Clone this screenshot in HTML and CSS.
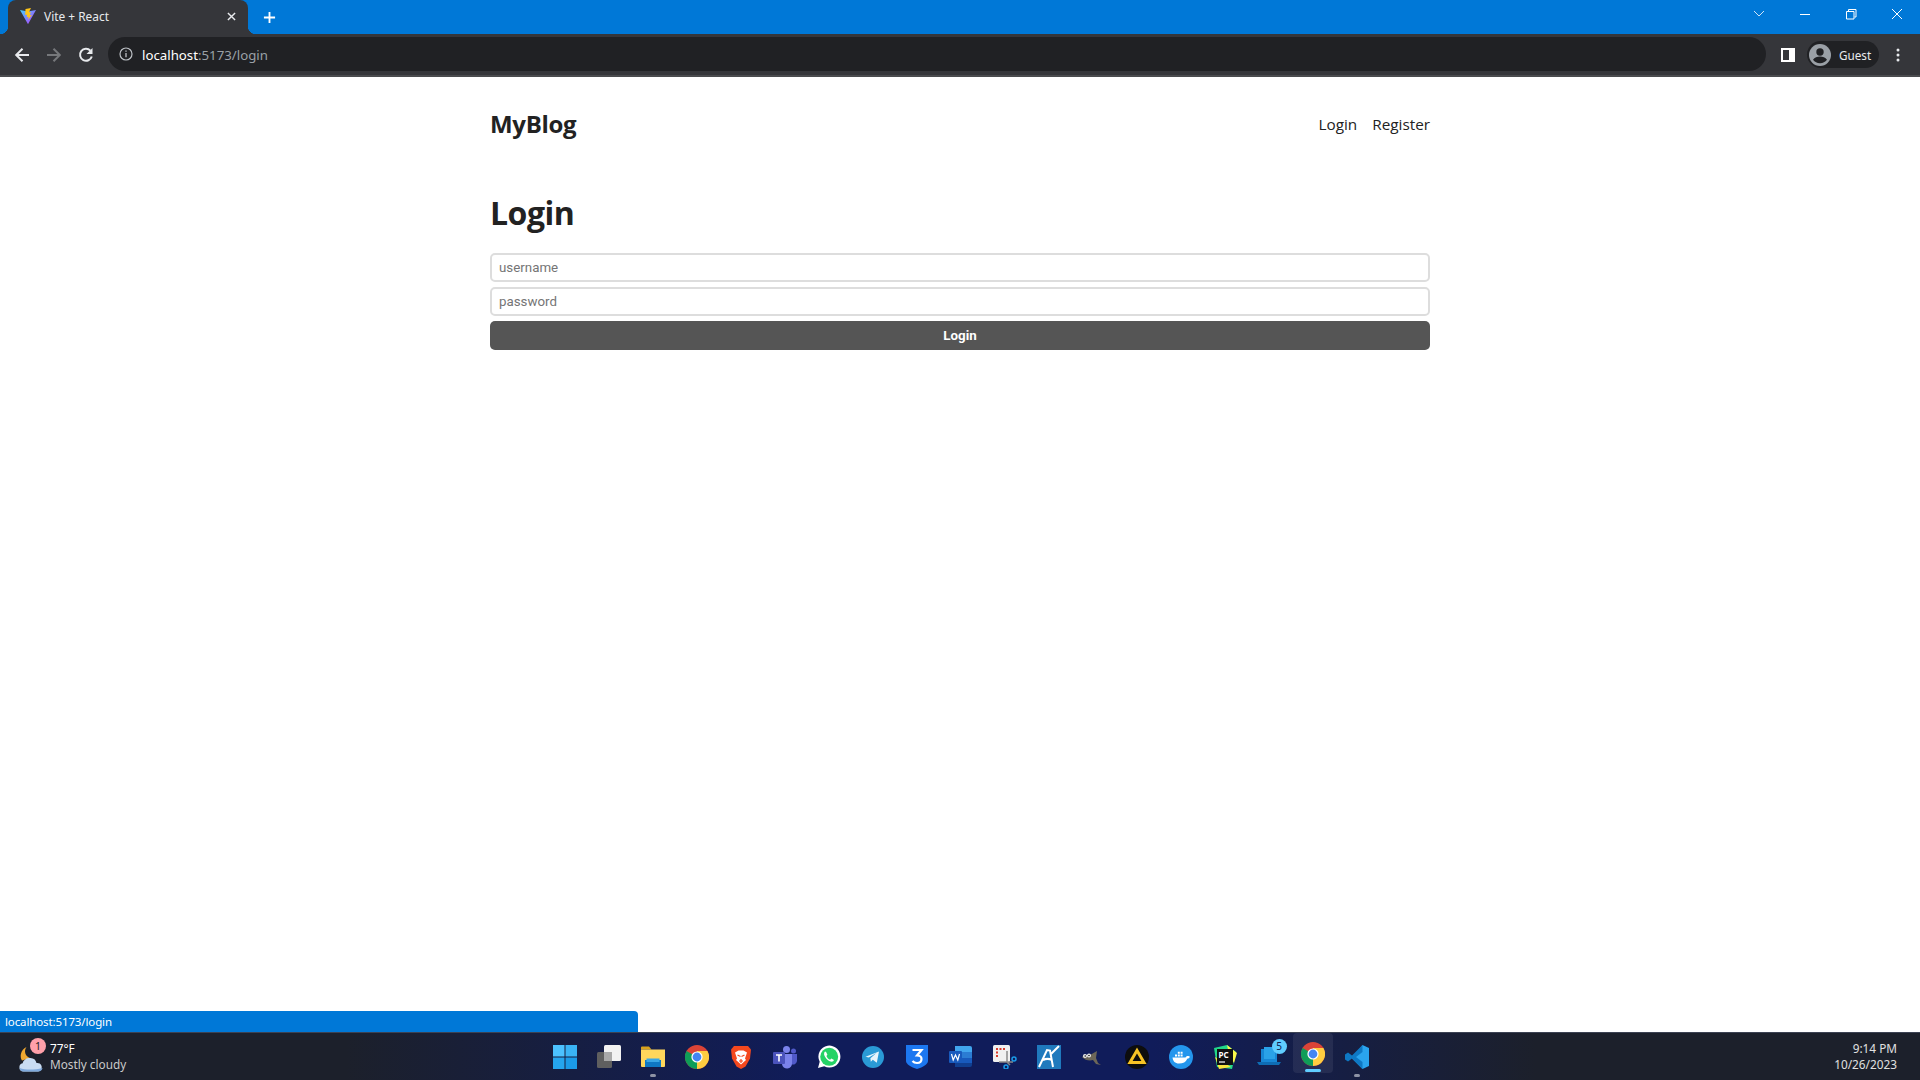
FILE: index.html
```html
<!DOCTYPE html>
<html lang="en">
<head>
<meta charset="utf-8">
<title>Vite + React</title>
<link rel="stylesheet" href="styles.css">
</head>
<body>
<div class="screen">
  <div class="titlebar">
    <div class="tab">
      <svg class="favicon" viewBox="0 0 16 16"><defs><linearGradient id="vg" x1="0" y1="0" x2="1" y2="1"><stop offset="0" stop-color="#41d1ff"/><stop offset="1" stop-color="#bd34fe"/></linearGradient></defs><path fill="url(#vg)" d="M0 2l8 1.400L16 2 8.400 15.600a.4.4 0 0 1-.8 0z"/><path fill="#ffc517" d="M11 0 5.500 1l-.3 6 2-.4-.4 2.600 1.800-.5-.5 3L12 7l-2.200.4.900-3.400-1.800.3z"/></svg>
      <span class="tab-title">Vite + React</span>
      <svg class="tab-close" viewBox="0 0 10 10"><path d="M1 1l8 8M9 1l-8 8" stroke="#e8eaed" stroke-width="1.600"/></svg>
    </div>
    <svg class="new-tab" viewBox="0 0 14 14"><path d="M7 1v12M1 7h12" stroke="#fff" stroke-width="2"/></svg>
    <div class="win-controls">
      <svg class="win-btn" viewBox="0 0 46 34"><path d="M18 11l5 5 5-5" fill="none" stroke="#cfe4f7" stroke-width="1"/></svg>
      <svg class="win-btn" viewBox="0 0 46 34"><path d="M18 14.500h10" stroke="#fff" stroke-width="1"/></svg>
      <svg class="win-btn" viewBox="0 0 46 34"><path d="M18.500 11.500h7.500v7.500h-7.500zM20.500 11V9.500h7.500v7.500H26.500" fill="none" stroke="#fff" stroke-width="1"/></svg>
      <svg class="win-btn" viewBox="0 0 46 34"><path d="M18 9l10 10M28 9 18 19" stroke="#fff" stroke-width="1"/></svg>
    </div>
  </div>
  <div class="toolbar">
    <div class="nav-btns">
      <svg class="nav-icon" viewBox="0 0 16 16"><path d="M15 8H2.500M8.500 1.800 2.200 8l6.300 6.200" fill="none" stroke="#e8eaed" stroke-width="2"/></svg>
      <svg class="nav-icon" viewBox="0 0 16 16"><path d="M1 8h12.500M7.500 1.800 13.800 8l-6.300 6.200" fill="none" stroke="#76787b" stroke-width="2"/></svg>
      <svg class="nav-icon" viewBox="0 0 16 16"><path d="M13.800 9.500A6 6 0 1 1 12.400 3.600" fill="none" stroke="#e8eaed" stroke-width="2"/><path d="M14.500 1v6h-6z" fill="#e8eaed"/></svg>
    </div>
    <div class="omnibox">
      <svg class="info" viewBox="0 0 14 14"><circle cx="7" cy="7" r="6" fill="none" stroke="#bdc1c6" stroke-width="1.200"/><path d="M7 6v4.300M7 3.500v1.300" stroke="#bdc1c6" stroke-width="1.300"/></svg>
      <span class="url"><span class="url-host">localhost</span>:5173/login</span>
    </div>
    <svg class="side-icon" viewBox="0 0 14 14"><path fill="#fff" fill-rule="evenodd" d="M0 0h14v14H0zM2 2v10h6V2z"/></svg>
    <div class="guest">
      <svg class="avatar" viewBox="0 0 22 22"><circle cx="11" cy="11" r="11" fill="#9aa0a6"/><circle cx="11" cy="8" r="3.700" fill="#202124"/><path d="M4 15.800c1.500-2.400 4.300-3.300 7-3.300s5.500.9 7 3.300A8.800 8.800 0 0 1 11 19.200a8.800 8.800 0 0 1-7-3.400z" fill="#202124"/></svg>
      <span>Guest</span>
    </div>
    <svg class="menu-dots" viewBox="0 0 4 14"><circle cx="2" cy="2" r="1.500" fill="#e8eaed"/><circle cx="2" cy="7" r="1.500" fill="#e8eaed"/><circle cx="2" cy="12" r="1.500" fill="#e8eaed"/></svg>
  </div>

  <div class="viewport">
    <main class="page">
      <header class="site-header">
        <a class="logo">MyBlog</a>
        <nav class="site-nav"><a>Login</a><a>Register</a></nav>
      </header>
      <h1 class="heading">Login</h1>
      <form class="form">
        <input class="field" type="text" placeholder="username">
        <input class="field" type="password" placeholder="password">
        <button class="submit" type="button">Login</button>
      </form>
    </main>
    <div class="status-bubble">localhost:5173/login</div>
  </div>

  <footer class="taskbar">
    <div class="weather">
      <div class="weather-icon">
        <svg viewBox="0 0 24 25"><path d="M7.500 0a7 7 0 0 0 3.500 11L3 13.500C.5 10 1.500 2.500 7.500 0z" fill="#f0a830"/><path d="M4.500 24.500a4.200 4.200 0 0 1-.8-8.300C4.500 12.500 8 10.500 11.500 11a6.500 6.500 0 0 1 6 5 4.300 4.300 0 0 1 1.800 8.500z" fill="#c9dcf2"/><path d="M.5 21c6 2 15 2 23 0a4.300 4.300 0 0 1-4.200 3.500H4.500A4.200 4.200 0 0 1 .5 21z" fill="#7fa9dc"/></svg>
        <span class="weather-badge">1</span>
      </div>
      <div class="weather-text"><span class="temp">77°F</span><span class="cond">Mostly cloudy</span></div>
    </div>

    <div class="apps">
      <div class="app"><svg viewBox="0 0 24 24"><path fill="#4cc2ff" d="M0 0h11.500v11.500H0z"/><path fill="#3ab4f5" d="M12.500 0H24v11.500H12.500z"/><path fill="#25a5ee" d="M0 12.500h11.500V24H0z"/><path fill="#1b9be8" d="M12.500 12.500H24V24H12.500z"/></svg></div>
      <div class="app"><svg viewBox="0 0 24 24"><rect x="0" y="7" width="15" height="16" rx="1.500" fill="#5f5f5f"/><rect x="7" y="0" width="17" height="16" rx="1.500" fill="#f2f2f2"/><path d="M7 7h8v9H7z" fill="#a9a9a9"/></svg></div>
      <div class="app app-open"><svg viewBox="0 0 24 24"><path d="M0 2.500A1 1 0 0 1 1 1.500h7l2.500 3H0z" fill="#d9a21c"/><path d="M0 4.500h24V21a1 1 0 0 1-1 1H1a1 1 0 0 1-1-1z" fill="#ffd75c"/><path d="M4 15h16v7H4z" fill="#0f78c4"/><path d="M5.500 13.500h13V17h-13z" fill="#3aa7e6"/></svg></div>
      <div class="app"><svg viewBox="0 0 24 24"><use href="#chrome"/></svg></div>
      <div class="app"><svg viewBox="0 0 24 24"><path d="M5 1h14l3 3.500-1 9-4.500 8L12 24l-4.500-2.500-4.500-8-1-9z" fill="#f4481e"/><path d="M6 7.500 9.500 5.500h5L18 7.500l-2 6 1 1.500-5 4.500L7 15l1-1.500z" fill="#fff"/><path d="M8.500 10l3 1.500M15.500 10l-3 1.500M12 14v4M10 16h4" stroke="#f4481e" stroke-width="1.200"/></svg></div>
      <div class="app"><svg viewBox="0 0 24 24"><circle cx="13.500" cy="4.500" r="3.500" fill="#7b83eb"/><circle cx="20.500" cy="6" r="2.500" fill="#5059c9"/><path d="M16 9h8v7a4 4 0 0 1-6 3z" fill="#5059c9"/><path d="M8 9h11v9a5 5 0 0 1-10 1z" fill="#7b83eb"/><rect x="0" y="7" width="12" height="12" rx="1" fill="#4b53bc"/><path d="M3 10h6M6 10v6.500" stroke="#fff" stroke-width="1.600"/></svg></div>
      <div class="app"><svg viewBox="0 0 24 24"><path d="M1 23l1.700-6.200A11 11 0 1 1 7.200 21.300z" fill="#fff"/><circle cx="12.200" cy="11.800" r="9" fill="#25d366"/><path d="M8 6.500c-1.500 1.500-1.300 4 1.200 7 2.800 3 5.500 4 7 2.800l.8-1.300-2.700-1.500-1.200 1.200c-1.500-.5-3-2-3.700-3.800l1-1.200-1.300-2.800z" fill="#fff"/></svg></div>
      <div class="app"><svg viewBox="0 0 24 24"><circle cx="12" cy="12" r="11" fill="#2a9ad6"/><path d="M4.500 11.800 18 6.500l-2.200 11.200-4-2.900-2 1.900-.4-3.500 6-5.200-7.600 4.500z" fill="#e8f4fb"/></svg></div>
      <div class="app"><svg viewBox="0 0 24 24"><path d="M1 0h22v16c0 3-5 6.500-11 8C6 22.500 1 19 1 16z" fill="#1c77f0"/><path d="M7.500 5h9L12 10.500c3 0 4.500 1.500 4.500 3.500 0 2.500-2 4-4.500 4-1.800 0-3.500-.8-4.500-2" fill="none" stroke="#fff" stroke-width="2.200"/></svg></div>
      <div class="app"><svg viewBox="0 0 24 24"><path d="M6 1h15a2 2 0 0 1 2 2v4H6z" fill="#41a5ee"/><path d="M6 7h17v6H6z" fill="#2b7cd3"/><path d="M6 13h17v5H6z" fill="#185abd"/><path d="M6 18h17v2a2 2 0 0 1-2 2H6z" fill="#103f91"/><rect x="0" y="6" width="13" height="12" rx="1" fill="#185abd"/><path d="M2.500 9l1.700 6 2.300-5 2.300 5 1.700-6" fill="none" stroke="#fff" stroke-width="1.200"/></svg></div>
      <div class="app"><svg viewBox="0 0 24 24"><rect x="0" y="0" width="17" height="17" rx="1.500" fill="#f0f0f0"/><path d="M3 3h2v2H3zM6.500 3h2v2h-2zM10 3h2v2h-2zM3 6.500h2v2H3zM3 10h2v2H3z" fill="#d83b2c"/><path d="M14 6v11M6 17h14M14 17l3 3" stroke="#8a8a8a" stroke-width="1.500"/><circle cx="21" cy="14" r="2" fill="none" stroke="#1a9be8" stroke-width="1.500"/><circle cx="13" cy="22" r="2" fill="none" stroke="#1a9be8" stroke-width="1.500"/></svg></div>
      <div class="app"><svg viewBox="0 0 24 24"><rect width="24" height="24" fill="#1f79bd"/><path d="M2 22 10 5l3 .5 3 16.500M6 15c3-1.500 6-1.500 9 0M14 9l8-8" fill="none" stroke="#fff" stroke-width="2"/></svg></div>
      <div class="app app-gimp"><svg viewBox="0 0 24 24"><path d="M1 12c2-2 5-2.500 8-2l7-4-1 7 2 5 3 2-5-1-3-4c-3 1-8 .5-11-3z" fill="#6c6658"/><circle cx="4" cy="11" r="2" fill="#eee"/><circle cx="8" cy="10.500" r="2" fill="#eee"/><circle cx="4.200" cy="11" r=".8" fill="#111"/><circle cx="8" cy="10.500" r=".8" fill="#111"/></svg></div>
      <div class="app"><svg viewBox="0 0 24 24"><circle cx="12" cy="12" r="12" fill="#0d0d0d"/><path d="M12 5.500 19 17.500H5z" fill="none" stroke="#f7c325" stroke-width="3"/></svg></div>
      <div class="app"><svg viewBox="0 0 24 24"><circle cx="12" cy="12" r="12" fill="#2496ed"/><path d="M3.500 12.500h13c.5-1.200 1.500-1.800 3-1.500l1.500.8c-.6 1.300-1.500 1.800-2.800 1.900C17 17 14 18.500 10 18.500c-4 0-6-2.200-6.500-6z" fill="#fff"/><path d="M6 9.500h2v2H6zM8.800 9.500h2v2h-2zM11.600 9.500h2v2h-2zM8.800 6.800h2v2h-2zM11.600 6.800h2v2h-2z" fill="#fff"/></svg></div>
      <div class="app"><svg viewBox="0 0 24 24"><path d="M1 3l13-3 9 7-4 17-15-2z" fill="#21d789"/><path d="M14 0l10 8-3 10-5-9z" fill="#fcf84a"/><path d="M2 12 18 22l-12 2z" fill="#f9e53c"/><rect x="4" y="4" width="16" height="16" fill="#111"/><path d="M6 17h6" stroke="#fff" stroke-width="1.200"/><text class="pc-text" x="5.500" y="12.500">PC</text></svg></div>
      <div class="app"><svg viewBox="0 0 24 24"><path d="M4 4h16v13H4z" fill="#1787d6"/><path d="M7 2h11v12H7z" fill="#2aa2e8"/><path d="M0 17h24l-2 3H2z" fill="#0e6cb4"/></svg><span class="app-badge">5</span></div>
      <div class="app app-active"><svg viewBox="0 0 24 24"><use href="#chrome"/></svg></div>
      <div class="app app-open"><svg viewBox="0 0 24 24"><path d="M17.500 0 24 3v18l-6.500 3L7 13.500z" fill="#2aa4ee"/><path d="M17.500 0 7 10.500l-4-3L0 9.500v5l3 2 4-3L17.500 24V17L11 12l6.500-5z" fill="#0e78c4"/></svg></div>
    </div>

    <div class="clock"><span>9:14 PM</span><span>10/26/2023</span></div>
  </footer>
</div>
<svg class="defs" width="0" height="0"><defs><symbol id="chrome" viewBox="0 0 24 24"><circle cx="12" cy="12" r="12" fill="#db4437"/><path d="M12 12 1.600 6A12 12 0 0 0 12 24z" fill="#0f9d58"/><path d="M12 12v12A12 12 0 0 0 22.400 6H12z" fill="#ffcd40"/><circle cx="12" cy="12" r="5.600" fill="#fff"/><circle cx="12" cy="12" r="4.400" fill="#4285f4"/></symbol></defs></svg>
</body>
</html>
```
FILE: styles.css
```css
* { box-sizing: border-box; }
html, body { margin: 0; height: 100%; }
body { font-family: "Open Sans", "Noto Sans", sans-serif; background: #fff; overflow: hidden; }
.defs { position: absolute; }

.screen { display: flex; flex-direction: column; height: 100vh; }

/* browser frame */
.titlebar { height: 34px; background: #0078d7; display: flex; align-items: flex-end; padding-left: 8px; flex: none; }
.tab { width: 240px; height: 34px; background: #35363a; border-radius: 8px 8px 0 0; display: flex; align-items: center; padding: 0 11px 2px 12px; position: relative; }
.tab::before, .tab::after { content: ""; position: absolute; bottom: 0; width: 8px; height: 8px; }
.tab::before { left: -8px; background: radial-gradient(circle at 0 0, transparent 8px, #35363a 8.500px); }
.tab::after { right: -8px; background: radial-gradient(circle at 100% 0, transparent 8px, #35363a 8.500px); }
.favicon { width: 16px; height: 16px; flex: none; }
.tab-title { margin-left: 8px; font-size: 11.900px; color: #e8eaed; flex: 1; font-family: "Noto Sans", sans-serif; }
.tab-close { width: 9px; height: 9px; flex: none; margin-right: 1px; }
.new-tab { width: 13px; height: 13px; margin: 0 0 10px 15px; flex: none; }
.win-controls { margin-left: auto; display: flex; height: 34px; }
.win-btn { width: 46px; height: 34px; display: block; }

.toolbar { height: 43px; background: #35363a; border-bottom: 2px solid #4a4b4e; display: flex; align-items: center; flex: none; padding-right: 20px; }
.nav-btns { display: flex; width: 108px; padding-left: 14px; gap: 16px; flex: none; }
.nav-icon { width: 16px; height: 16px; flex: none; }
.omnibox { flex: 1; height: 34px; margin-top: -1px; background: #202124; border-radius: 17px; display: flex; align-items: center; padding-left: 11px; }
.info { width: 14px; height: 14px; flex: none; }
.url { margin-left: 9px; padding-top: 1px; font-size: 13.250px; color: #9aa0a6; font-family: "Noto Sans", sans-serif; }
.url-host { color: #fff; }
.side-icon { width: 14px; height: 14px; margin-left: 15px; flex: none; }
.guest { width: 72px; height: 27px; margin-left: 12px; background: #202124; border-radius: 14px; display: flex; align-items: center; padding-left: 2px; gap: 8px; color: #e8eaed; font-size: 11.700px; flex: none; font-family: "Noto Sans", sans-serif; }
.avatar { width: 22px; height: 22px; flex: none; }
.menu-dots { width: 4px; height: 14px; margin-left: 17px; flex: none; }

/* page */
.viewport { flex: 1; position: relative; min-height: 0; }
.page { width: 940px; margin: 0 auto; padding-top: 29px; color: #222; }
.site-header { display: flex; justify-content: space-between; align-items: center; height: 36px; margin-bottom: 49px; }
.logo { font-weight: 700; font-size: 24px; letter-spacing: -0.300px; margin-top: -2px; }
.site-nav { display: flex; gap: 15px; font-size: 15.300px; }
.heading { font-size: 32px; font-weight: 700; margin: 0 0 18px; line-height: 44px; letter-spacing: -0.500px; }
.form { display: flex; flex-direction: column; gap: 5px; }
.field { height: 29px; border: 2px solid #ddd; border-radius: 5px; background: #fff; padding: 0 7px; font: 13.333px Roboto, sans-serif; width: 100%; }
.field::placeholder { color: #757575; }
.submit { height: 29px; border: 0; border-radius: 5px; background: #555; color: #fff; font: 700 13.333px Roboto, sans-serif; width: 100%; }

.status-bubble { position: absolute; left: 0; bottom: 0; width: 638px; height: 21px; background: #0078d7; color: #fff; font-size: 11.500px; letter-spacing: -0.120px; line-height: 21px; padding-left: 5px; border-top-right-radius: 4px; font-family: "Noto Sans", sans-serif; }

/* taskbar */
.taskbar { height: 48px; flex: none; display: grid; grid-template-columns: 1fr auto 1fr; align-items: center; background: linear-gradient(90deg, #1c202b 0, #1c202b 18%, #101c5a 42%, #101c5a 60%, #1c202b 80%, #1c202b 100%); border-top: 1px solid #3c4253; font-family: "Noto Sans", sans-serif; }
.weather { display: flex; align-items: center; padding-left: 19px; gap: 7px; }
.weather-icon { width: 24px; height: 38px; position: relative; }
.weather-icon svg { width: 24px; height: 25px; position: absolute; left: 0; bottom: 4px; }
.weather-badge { position: absolute; left: 11px; top: 0; width: 16px; height: 16px; background: #ffa0aa; border-radius: 50%; font-size: 10.500px; line-height: 16px; text-align: center; color: #222; }
.weather-text { display: flex; flex-direction: column; font-size: 11.800px; line-height: 16px; color: #fff; }
.temp { margin-top: -1px; }
.cond { color: #c9c9c9; }
.apps { display: flex; margin-left: 1px; }
.app { width: 44px; height: 47px; display: flex; align-items: center; justify-content: center; position: relative; }
.app svg { width: 24px; height: 24px; }
.app-open::after { content: ""; position: absolute; bottom: 3px; left: 19px; width: 6px; height: 3px; border-radius: 2px; background: #8e93a5; }
.app-active { background: rgba(255, 255, 255, 0.07); border-radius: 4px; width: 40px; margin: 0 2px; height: 40px; padding-top: 2px; }
.app-active::after { content: ""; position: absolute; bottom: 1px; left: 12px; width: 16px; height: 3px; border-radius: 2px; background: #60cdff; }
.app-badge { position: absolute; right: 4px; top: 6px; width: 15px; height: 15px; border-radius: 50%; background: #60cdff; color: #10204f; font-size: 10px; line-height: 15px; text-align: center; }
.pc-text { font: 700 8px "Noto Sans", sans-serif; fill: #fff; }
.clock { display: flex; flex-direction: column; align-items: flex-end; font-size: 11.800px; line-height: 16px; color: #e0e0e0; padding-right: 23px; margin-top: -1px; }
```
